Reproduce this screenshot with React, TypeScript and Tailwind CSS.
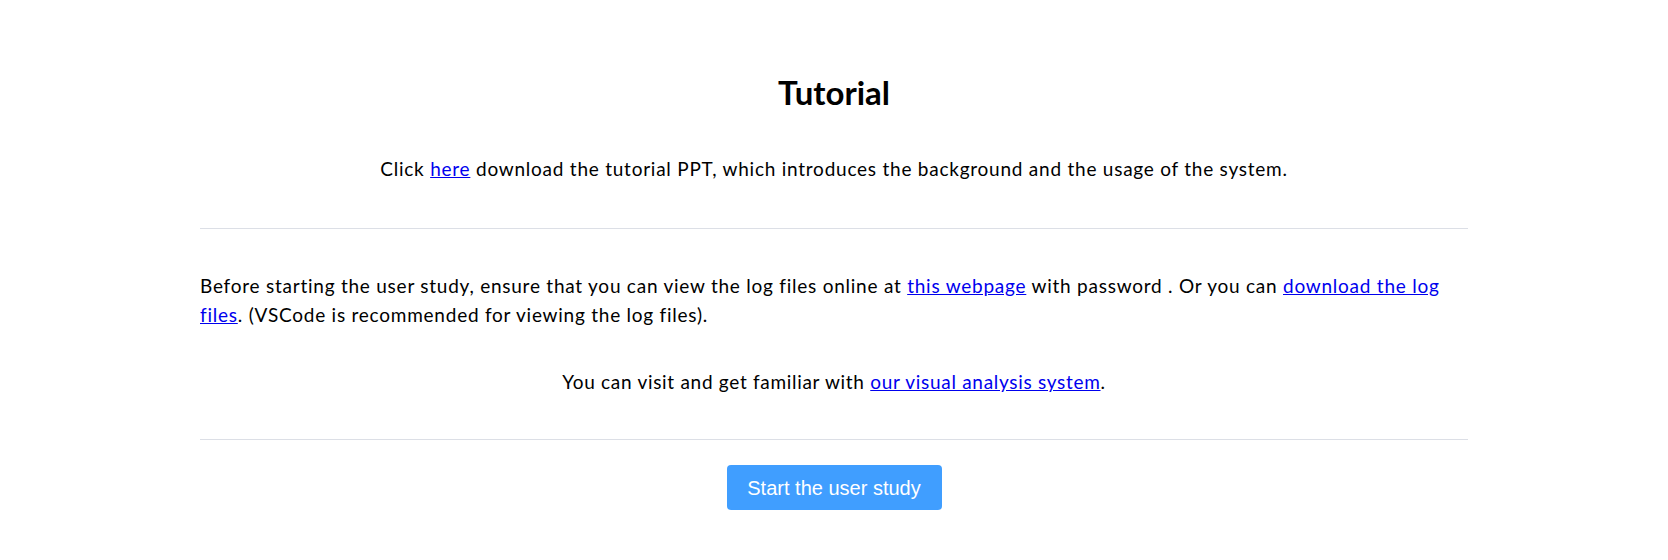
import React from "react";

export default function App() {
  const font = { fontFamily: "Lato, 'Noto Sans', sans-serif" };
  return (
    <div className="min-h-[560px] w-full bg-white text-black" style={font}>
      <div className="px-[200px] pt-[72px]">
        <h1 className="text-center text-[33px] font-bold leading-[40px]">Tutorial</h1>
        <p className="mt-[42px] text-center text-[19px] leading-[29px] tracking-[0.76px]">
          Click <a href="#" className="text-[#0000ee] underline">here</a> download the tutorial PPT, which introduces the background and the usage of the system.
        </p>
        <div className="mt-[45px] h-px bg-[#dcdfe6]" />
        <p className="mt-[42px] text-[19px] leading-[29px] tracking-[0.76px]">
          Before starting the user study, ensure that you can view the log files online at{" "}
          <a href="#" className="text-[#0000ee] underline">this webpage</a> with password . Or you can{" "}
          <a href="#" className="text-[#0000ee] underline">download the log files</a>. (VSCode is recommended for viewing the log files).
        </p>
        <p className="mt-[38px] text-center text-[19px] leading-[29px] tracking-[0.7px]">
          You can visit and get familiar with{" "}
          <a href="#" className="text-[#0000ee] underline">our visual analysis system</a>.
        </p>
        <div className="mt-[43px] h-px bg-[#dcdfe6]" />
        <div className="mt-[25px] flex justify-center">
          <button
            className="h-[45px] w-[215px] rounded-[4px] bg-[#409eff] text-[20px] text-white"
            style={{ fontFamily: "'Liberation Sans', Arial, sans-serif" }}
          >
            Start the user study
          </button>
        </div>
      </div>
    </div>
  );
}
